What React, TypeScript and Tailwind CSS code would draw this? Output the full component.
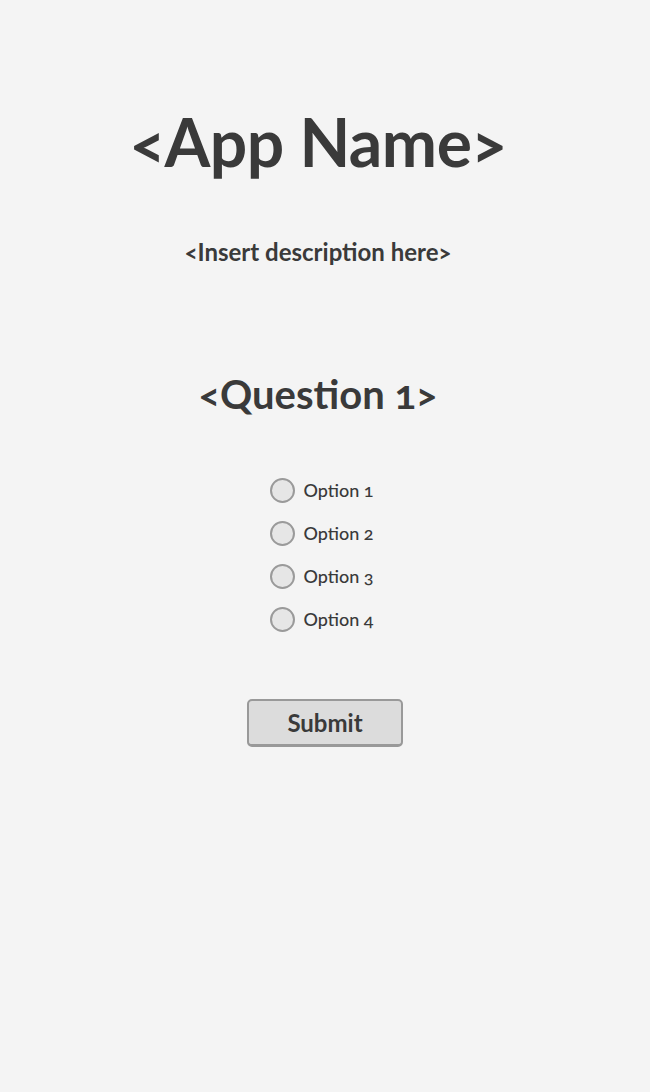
import { useState } from 'react';

const options = ['Option 1', 'Option 2', 'Option 3', 'Option 4'];

export default function App() {
  const [choice, setChoice] = useState<string>('');

  return (
    <main className="min-h-[1092px] w-full bg-[#f4f4f4] text-[#3a3a3a] font-['Lato','Open_Sans',sans-serif] [font-feature-settings:'onum'] flex flex-col items-center">
      <div className="flex flex-col items-center pr-[14px]">
        <h1 className="mt-[104px] text-[66px] leading-[76px] font-bold tracking-[-0.5px]">&lt;App Name&gt;</h1>
        <p className="mt-[57px] text-[24px] leading-[30px] font-bold">&lt;Insert description here&gt;</p>
        <h2 className="mt-[103px] text-[40px] leading-[48px] font-bold">&lt;Question 1&gt;</h2>
      </div>

      <form className="mt-[60px] flex flex-col items-center" onSubmit={e => e.preventDefault()}>
        <div className="flex flex-col gap-[19px] pr-[6px]">
          {options.map(o => (
            <label key={o} className="flex items-center gap-[8px] h-[24px] cursor-pointer">
              <input
                type="radio"
                name="q1"
                checked={choice === o}
                onChange={() => setChoice(o)}
                className="appearance-none w-[25px] h-[25px] rounded-full bg-[#e6e6e6] border-2 border-[#9a9a9a] checked:bg-[#3a3a3a]"
              />
              <span className="text-[18px] leading-[24px] font-medium">{o}</span>
            </label>
          ))}
        </div>
        <button
          type="submit"
          className="mt-[68px] w-[156px] h-[48px] rounded-[5px] bg-[#dcdcdc] border-2 border-b-[3px] border-[#999999] text-[24px] font-bold text-[#3a3a3a]"
        >
          Submit
        </button>
      </form>
    </main>
  );
}
